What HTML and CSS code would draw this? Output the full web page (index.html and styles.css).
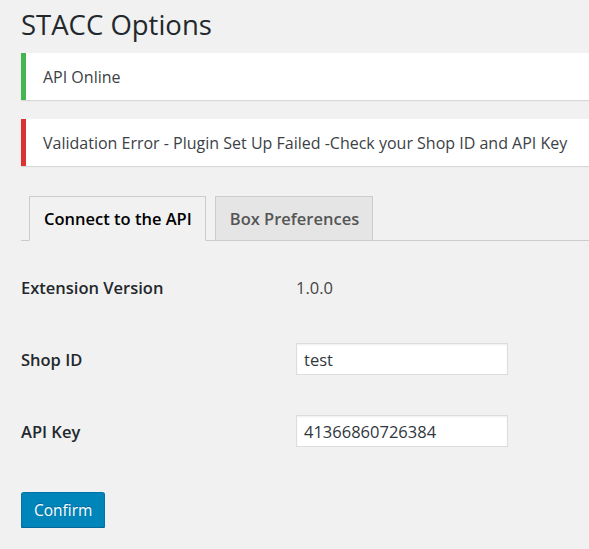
FILE: index.html
```html
<!DOCTYPE html>
<html lang="en">
<head>
    <meta charset="UTF-8">
    <meta name="viewport" content="width=device-width, initial-scale=1.0">
    <title>STACC Options</title>
    <link rel="stylesheet" href="styles.css">
</head>
<body>
    <div class="wrap">
        <h1 class="page-title">STACC Options</h1>

        <div class="notice notice-success"><p>API Online</p></div>
        <div class="notice notice-error"><p>Validation Error - Plugin Set Up Failed -Check your Shop ID and API Key</p></div>

        <!-- settings tabs -->
        <nav class="tabs">
            <a href="#" class="tab tab-active">Connect to the API</a>
            <a href="#" class="tab">Box Preferences</a>
        </nav>

        <form class="options">
            <div class="row">
                <label class="row-label">Extension Version</label>
                <div class="row-value">1.0.0</div>
            </div>
            <div class="row">
                <label class="row-label" for="shop_id">Shop ID</label>
                <input class="text-input" type="text" id="shop_id" value="test">
            </div>
            <div class="row">
                <label class="row-label" for="api_key">API Key</label>
                <input class="text-input" type="text" id="api_key" value="41366860726384">
            </div>
            <button type="button" class="button-primary">Confirm</button>
        </form>
    </div>
</body>
</html>
```

FILE: styles.css
```css
body {
    margin: 0;
    background: #f1f1f1;
    color: #444;
    font-family: "Open Sans", "Noto Sans", sans-serif;
    font-size: 16px;
    overflow: hidden;
}

.wrap {
    padding-left: 21px;
}

.page-title {
    margin: 0;
    padding: 7px 0 0;
    height: 46px;
    font-size: 27.5px;
    font-weight: 400;
    line-height: 36px;
    color: #23282d;
}

/* Notices */
.notice {
    background: #fff;
    border-left: 5px solid #fff;
    box-shadow: 0 1px 1px rgba(0, 0, 0, 0.1);
    padding: 0 15px;
    height: 47px;
    display: flex;
    align-items: center;
}

.notice + .notice {
    margin-top: 19px;
}

.notice p {
    margin: 0;
    padding: 0 2px;
    font-size: 16px;
    color: #3c4146;
}

.notice-success {
    border-left-color: #46b450;
}

.notice-error {
    border-left-color: #dc3232;
}

/* Tabs */
.tabs {
    margin-top: 30px;
    display: flex;
    gap: 9px;
    padding-left: 8px;
    border-bottom: 1px solid #ccc;
}

.tab {
    display: block;
    height: 43px;
    line-height: 43px;
    padding: 0 13px 0 14px;
    margin-bottom: -1px;
    border: 1px solid #ccc;
    border-bottom: none;
    background: #e5e5e5;
    color: #555;
    font-size: 16.5px;
    font-weight: 600;
    text-decoration: none;
}

.tab-active {
    background: #f1f1f1;
    color: #000;
    border-bottom: 1px solid #f1f1f1;
}

/* Form rows */
.options {
    padding-top: 10px;
}

.row {
    display: flex;
    align-items: center;
    height: 72px;
}

.row-label {
    width: 275px;
    flex-shrink: 0;
    font-size: 16.5px;
    font-weight: 600;
    color: #23282d;
}

.row-value {
    font-size: 16.5px;
    color: #444;
}

.text-input {
    box-sizing: border-box;
    width: 212px;
    height: 32px;
    margin: 0;
    padding: 0 7px;
    border: 1px solid #ddd;
    box-shadow: inset 0 1px 2px rgba(0, 0, 0, 0.07);
    background: #fff;
    color: #32373c;
    font-family: inherit;
    font-size: 16.5px;
    outline: none;
}

.button-primary {
    margin-top: 25px;
    height: 36px;
    padding: 0 12px;
    background: #0085ba;
    border: 1px solid #0073aa;
    border-bottom-color: #006799;
    border-radius: 3px;
    box-shadow: 0 1px 0 #006799;
    color: #fff;
    text-shadow: 0 -1px 1px #006799;
    font-family: inherit;
    font-size: 15.5px;
    cursor: pointer;
}
```
